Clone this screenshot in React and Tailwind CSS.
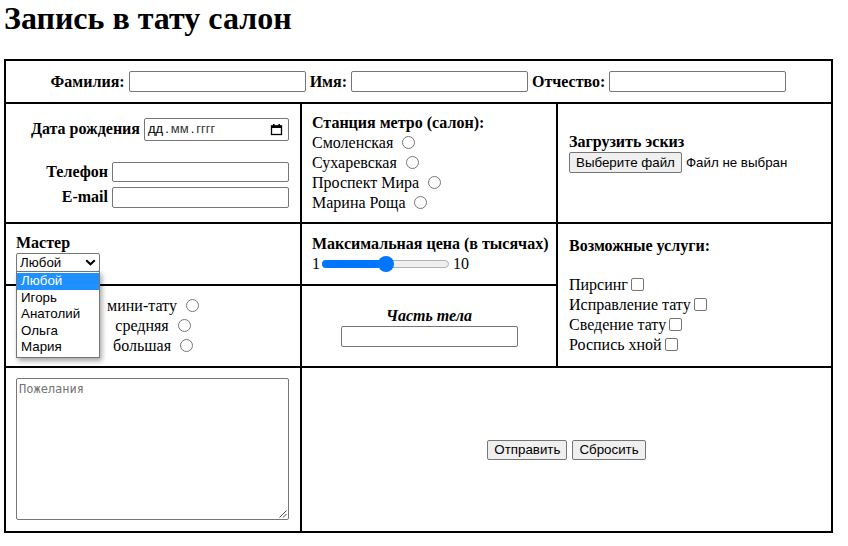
import React from "react";

function Radio() {
  return (
    <span className="inline-block w-[13px] h-[13px] rounded-full border border-[#767676] bg-white ml-[5px] align-[-1px]" />
  );
}

function Check() {
  return (
    <span className="inline-block w-[13px] h-[13px] rounded-[2px] border border-[#767676] bg-white ml-[3px] align-[-1px]" />
  );
}

function CalendarIcon() {
  return (
    <svg width="13" height="13" viewBox="0 0 13 13">
      <rect x="1.5" y="3" width="10" height="8.5" fill="none" stroke="#000" strokeWidth="1.3" />
      <rect x="1" y="2.5" width="11" height="2.5" fill="#000" />
      <rect x="3" y="1" width="1.6" height="2" fill="#000" />
      <rect x="8.4" y="1" width="1.6" height="2" fill="#000" />
    </svg>
  );
}

export default function App() {
  return (
    <div className="font-['Liberation_Serif',serif] text-[16px] text-black bg-white min-h-[546px]">
      <h1 className="text-[32px] leading-[36px] font-bold pl-[4px]">Запись в тату салон</h1>
      <div className="ml-[4px] mt-[23px] w-[829px] bg-black p-[2px] grid gap-[2px] grid-cols-[294px_254px_273px] grid-rows-[41px_118px_60px_80px_163px]">
        {/* Row 1 */}
        <div className="col-span-3 bg-white flex items-center justify-center gap-[4px] font-bold">
          <span>Фамилия:</span>
          <input className="w-[177px] h-[21px] border border-[#767676] rounded-[2px] bg-white" />
          <span>Имя:</span>
          <input className="w-[177px] h-[21px] border border-[#767676] rounded-[2px] bg-white" />
          <span>Отчество:</span>
          <input className="w-[177px] h-[21px] border border-[#767676] rounded-[2px] bg-white" />
        </div>

        {/* Row 2 */}
        <div className="bg-white flex flex-col items-end justify-center pr-[11px] font-bold">
          <div className="flex items-center gap-[4px]">
            <span>Дата рождения</span>
            <div className="w-[145px] h-[23px] border border-[#767676] rounded-[2px] flex items-center justify-between pl-[3px] pr-[5px] font-['Liberation_Sans',Arial,sans-serif] text-[13px] font-normal">
              <span className="flex items-center">
                <span>дд</span>
                <span className="mx-[2px]">.</span>
                <span className="text-[#333]">мм</span>
                <span className="mx-[2px]">.</span>
                <span className="text-[#333]">гггг</span>
              </span>
              <CalendarIcon />
            </div>
          </div>
          <div className="mt-[19px] grid grid-cols-[auto_177px] gap-x-[4px] gap-y-[1px] items-center">
            <span className="text-right">Телефон</span>
            <input className="w-[177px] h-[20px] border border-[#767676] rounded-[2px] bg-white" />
            <span className="text-right">E-mail</span>
            <input className="w-[177px] h-[21px] border border-[#767676] rounded-[2px] bg-white" />
          </div>
        </div>
        <div className="bg-white flex flex-col justify-center pl-[10px] leading-[20px]">
          <b>Станция метро (салон):</b>
          <div>Смоленская <Radio /></div>
          <div>Сухаревская <Radio /></div>
          <div>Проспект Мира <Radio /></div>
          <div>Марина Роща <Radio /></div>
        </div>
        <div className="bg-white pl-[11px] pt-[28px] leading-[20px]">
          <div className="font-bold">Загрузить эскиз</div>
          <div className="flex items-center font-['Liberation_Sans',Arial,sans-serif] text-[13.33px]">
            <button className="h-[21px] px-[6px] border border-[#767676] rounded-[2px] bg-[#efefef] leading-[17px]">Выберите файл</button>
            <span className="ml-[4px]">Файл не выбран</span>
          </div>
        </div>

        {/* Row 3 */}
        <div className="bg-white pl-[10px] pt-[9px] leading-[20px]">
          <b>Мастер</b>
          <div className="relative w-[84px] h-[19px]">
            <div className="w-[84px] h-[19px] border border-[#767676] rounded-[2px] bg-white flex items-center justify-between pl-[3px] pr-[3px] font-['Liberation_Sans',Arial,sans-serif] text-[13.33px]">
              <span>Любой</span>
              <svg width="11" height="7" viewBox="0 0 11 7">
                <path d="M1.2 1.2 L5.5 5.3 L9.8 1.2" fill="none" stroke="#000" strokeWidth="2" />
              </svg>
            </div>
            <div className="absolute z-10 left-0 top-[18px] w-[84px] border border-[#767676] bg-white py-[1px] shadow-[2px_3px_5px_rgba(0,0,0,0.35)] font-['Liberation_Sans',Arial,sans-serif] text-[13.33px] leading-[16.5px]">
              <div className="pl-[4px] bg-[#1e90ff] text-white">Любой</div>
              <div className="pl-[4px]">Игорь</div>
              <div className="pl-[4px]">Анатолий</div>
              <div className="pl-[4px]">Ольга</div>
              <div className="pl-[4px]">Мария</div>
            </div>
          </div>
        </div>
        <div className="bg-white pl-[10px] flex flex-col justify-center leading-[20px]">
          <b>Максимальная цена (в тысячах)</b>
          <div className="flex items-center h-[20px]">
            <span>1</span>
            <div className="relative w-[127px] h-[16px] ml-[2px] mr-[4px]">
              <div className="absolute left-0 right-0 top-[4px] h-[8px] rounded-full bg-[#efefef] border border-[#b2b2b2]" />
              <div className="absolute left-0 top-[4px] w-[64px] h-[8px] rounded-l-full bg-[#0075ff]" />
              <div className="absolute left-[56px] top-0 w-[16px] h-[16px] rounded-full bg-[#0075ff]" />
            </div>
            <span>10</span>
          </div>
        </div>
        <div className="row-span-2 bg-white pl-[11px] flex flex-col justify-center leading-[20px]">
          <b>Возможные услуги:</b>
          <div className="h-[19px]" />
          <div>Пирсинг<Check /></div>
          <div>Исправление тату<Check /></div>
          <div>Сведение тату<Check /></div>
          <div>Роспись хной<Check /></div>
        </div>

        {/* Row 4 */}
        <div className="bg-white flex flex-col justify-center items-center leading-[20px]">
          <div>мини-тату <Radio /></div>
          <div>средняя <Radio /></div>
          <div>большая <Radio /></div>
        </div>
        <div className="bg-white flex flex-col justify-center items-center leading-[20px]">
          <b className="italic">Часть тела</b>
          <input className="w-[177px] h-[21px] border border-[#767676] rounded-[2px] bg-white" />
        </div>

        {/* Row 5 */}
        <div className="bg-white pl-[10px] pt-[10px]">
          <div className="relative w-[273px] h-[142px] border border-[#767676] rounded-[2px] bg-white px-[2px] pt-[3px] font-['DejaVu_Sans_Mono',monospace] text-[12px] leading-[14px] text-[#757575]">
            Пожелания
            <svg className="absolute right-[1px] bottom-[1px]" width="9" height="9" viewBox="0 0 9 9">
              <path d="M8.5 1.5 L1.5 8.5 M8.5 5 L5 8.5" stroke="#444" strokeWidth="1" />
            </svg>
          </div>
        </div>
        <div className="col-span-2 bg-white flex items-center justify-center gap-[5px] font-['Liberation_Sans',Arial,sans-serif] text-[13.33px]">
          <button className="h-[20px] px-[6px] border border-[#767676] rounded-[2px] bg-[#efefef] leading-[17px]">Отправить</button>
          <button className="h-[20px] px-[6px] border border-[#767676] rounded-[2px] bg-[#efefef] leading-[17px]">Сбросить</button>
        </div>
      </div>
    </div>
  );
}
